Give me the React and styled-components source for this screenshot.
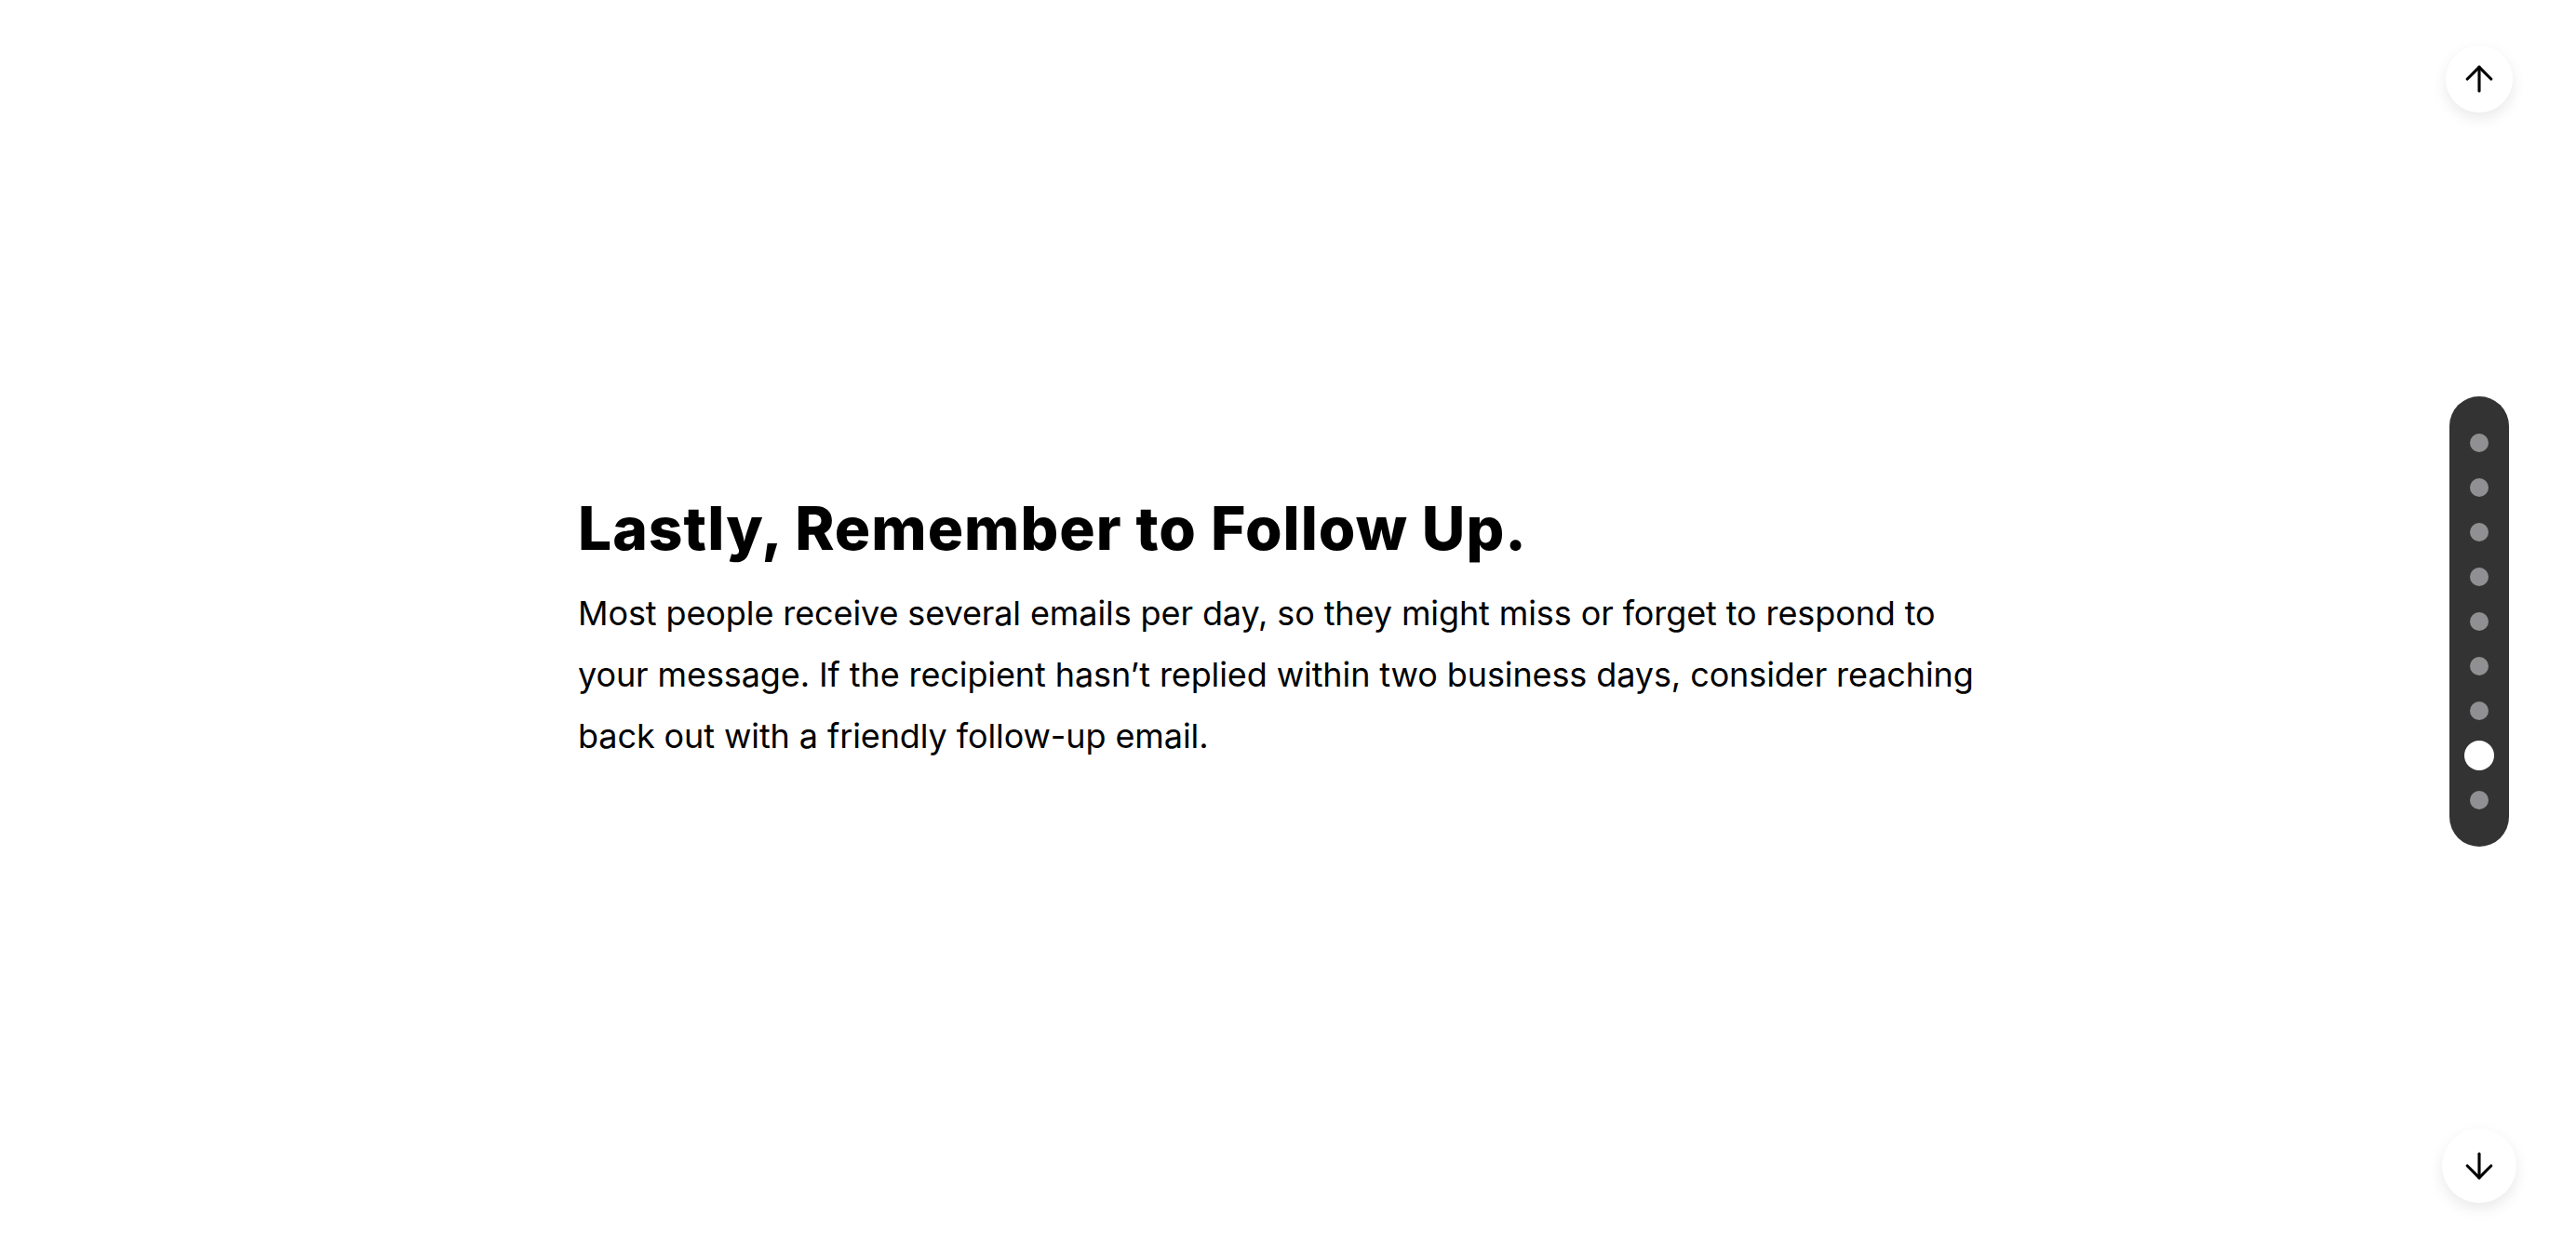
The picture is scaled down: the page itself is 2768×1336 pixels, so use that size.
import React from 'react'
import styled, { createGlobalStyle } from 'styled-components'
import { ArrowUp, ArrowDown } from 'lucide-react'

const GlobalStyle = createGlobalStyle`
  html, body { margin: 0; padding: 0; background: #fff; }
  body { font-family: Inter, "Noto Sans", sans-serif; color: #000; }
`

const Page = styled.main`
  min-height: 100vh;
  display: flex;
  align-items: center;
  justify-content: center;
  box-sizing: border-box;
  padding-top: 18px;
`

const Section = styled.section`
  width: 1526px;
`

const Title = styled.h1`
  margin: 0 0 19px;
  font-size: 64px;
  line-height: 1.2;
  font-weight: 800;
  letter-spacing: 1px;
`

const Body = styled.p`
  margin: 0;
  font-size: 36px;
  line-height: 66px;
  font-weight: 400;
  letter-spacing: -0.1px;
`

const RoundButton = styled.button`
  position: fixed;
  right: ${p => p.$right}px;
  ${p => (p.$bottom != null ? `bottom: ${p.$bottom}px;` : `top: ${p.$top}px;`)}
  width: ${p => p.$size}px;
  height: ${p => p.$size}px;
  border: none;
  border-radius: 50%;
  background: #fff;
  box-shadow: 0 6px 16px rgba(0, 0, 0, 0.09);
  display: flex;
  align-items: center;
  justify-content: center;
  padding: 0;
  cursor: pointer;
  color: #000;
`

const Dots = styled.nav`
  position: fixed;
  right: 72px;
  top: 50%;
  transform: translateY(-50%);
  width: 64px;
  padding: 26px 0;
  border-radius: 32px;
  background: #333;
  display: flex;
  flex-direction: column;
`

const DotSlot = styled.div`
  height: 48px;
  display: flex;
  align-items: center;
  justify-content: center;
`

const Dot = styled.span`
  display: block;
  width: ${p => (p.$active ? 32 : 20)}px;
  height: ${p => (p.$active ? 32 : 20)}px;
  border-radius: 50%;
  background: ${p => (p.$active ? '#fff' : '#909093')};
`

const slides = [0, 1, 2, 3, 4, 5, 6, 7, 8]
const current = 7

export default function App() {
  return (
    <>
      <GlobalStyle />
      <Page>
        <Section>
          <Title>Lastly, Remember to Follow Up.</Title>
          <Body>
            Most people receive several emails per day, so they might miss or forget to respond to
            your message. If the recipient hasn’t replied within two business days, consider reaching
            back out with a friendly follow-up email.
          </Body>
        </Section>
      </Page>

      <RoundButton $top={49} $right={68} $size={72} aria-label="Previous">
        <ArrowUp size={44} strokeWidth={1.7} />
      </RoundButton>

      <Dots>
        {slides.map(i => (
          <DotSlot key={i}>
            <Dot $active={i === current} />
          </DotSlot>
        ))}
      </Dots>

      <RoundButton $bottom={43} $right={64} $size={80} aria-label="Next">
        <ArrowDown size={44} strokeWidth={1.7} />
      </RoundButton>
    </>
  )
}
